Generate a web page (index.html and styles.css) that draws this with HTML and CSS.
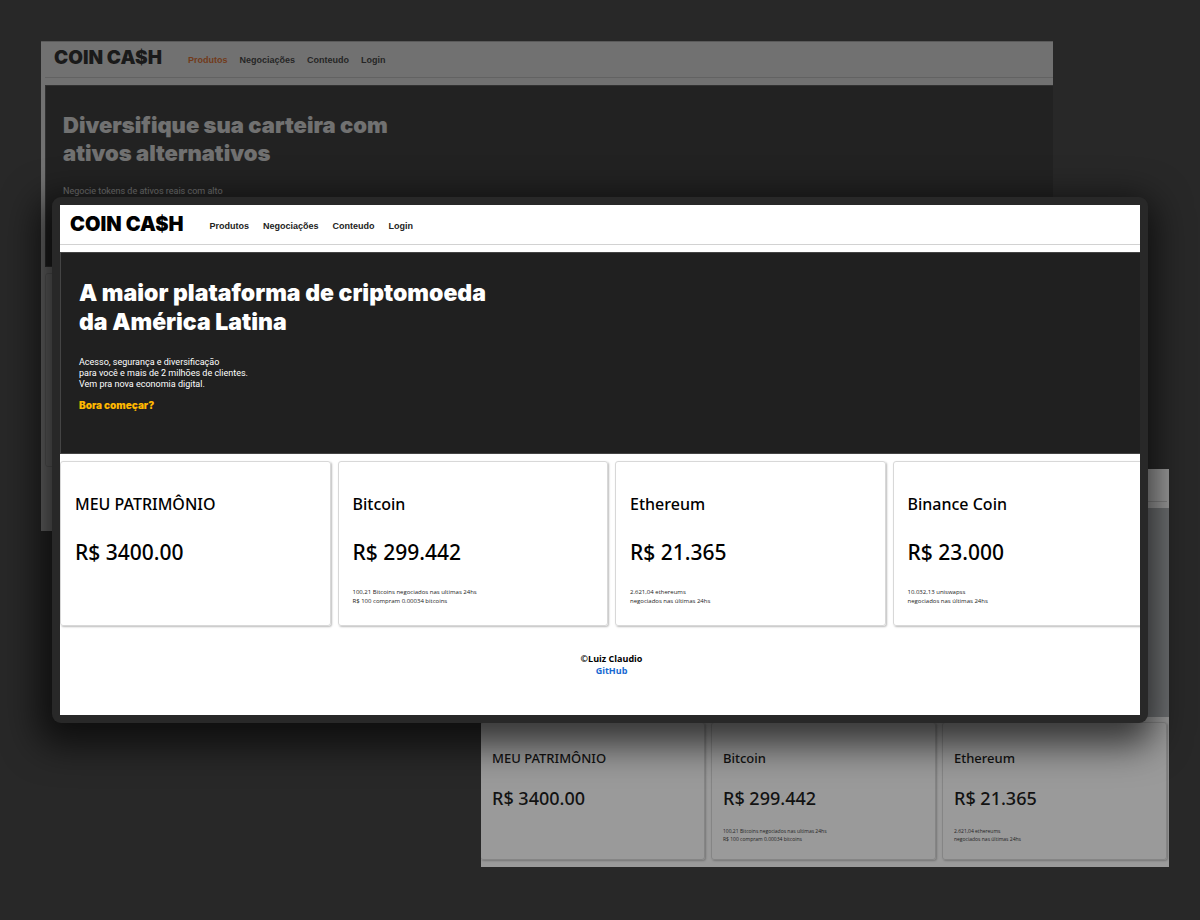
FILE: index.html
```html
<!DOCTYPE html>
<html lang="pt-BR">
<head>
<meta charset="utf-8">
<title>Coin Ca$h</title>
<link rel="stylesheet" href="styles.css">
</head>
<body>
<main class="stage">
  <section class="window window-products">
    <header class="topbar">
      <div class="logo">COIN CA$H</div>
      <nav class="menu">
        <a class="active" href="#produtos">Produtos</a>
        <a href="#negociacoes">Negociações</a>
        <a href="#conteudo">Conteudo</a>
        <a href="#login">Login</a>
      </nav>
    </header>
    <div class="hero">
      <h2>Diversifique sua carteira com<br>ativos alternativos</h2>
      <p>Negocie tokens de ativos reais com alto</p>
    </div>
    <div class="panel"></div>
  </section>

  <section class="window window-wallet">
    <header class="topbar"></header>
    <div class="hero"></div>
    <div class="cards">
      <article class="card"><h3>MEU PATRIMÔNIO</h3><p class="price">R$ 3400.00</p></article>
      <article class="card"><h3>Bitcoin</h3><p class="price">R$ 299.442</p><p class="note">100,21 Bitcoins negociados nas ultimas 24hs<br>R$ 100 compram 0.00034 bitcoins</p></article>
      <article class="card"><h3>Ethereum</h3><p class="price">R$ 21.365</p><p class="note">2.621,04 ethereums<br>negociados nas últimas 24hs</p></article>
    </div>
  </section>

  <section class="window-home">
    <div class="screen">
      <div class="page">
        <header class="topbar">
          <div class="logo">COIN CA$H</div>
          <nav class="menu">
            <a href="#produtos">Produtos</a>
            <a href="#negociacoes">Negociações</a>
            <a href="#conteudo">Conteudo</a>
            <a href="#login">Login</a>
          </nav>
        </header>
        <div class="hero">
          <h1>A maior plataforma de criptomoeda<br>da América Latina</h1>
          <p>Acesso, segurança e diversificação<br>para você e mais de 2 milhões de clientes.<br>Vem pra nova economia digital.</p>
          <a class="cta" href="#comecar">Bora começar?</a>
        </div>
        <div class="cards">
          <article class="card"><h3>MEU PATRIMÔNIO</h3><p class="price">R$ 3400.00</p></article>
          <article class="card"><h3>Bitcoin</h3><p class="price">R$ 299.442</p><p class="note">100,21 Bitcoins negociados nas ultimas 24hs<br>R$ 100 compram 0.00034 bitcoins</p></article>
          <article class="card"><h3>Ethereum</h3><p class="price">R$ 21.365</p><p class="note">2.621,04 ethereums<br>negociados nas últimas 24hs</p></article>
          <article class="card"><h3>Binance Coin</h3><p class="price">R$ 23.000</p><p class="note">10.032,13 uniswapss<br>negociados nas últimas 24hs</p></article>
        </div>
        <footer class="footer">©Luiz Claudio<br><a href="#github">GitHub</a></footer>
      </div>
    </div>
  </section>
</main>
</body>
</html>
```
FILE: styles.css
```css
* { box-sizing: border-box; }

body {
  margin: 0;
  background: #282828;
  color: #000;
  font-family: "Noto Sans", "Open Sans", sans-serif;
}

h1, h2, h3, p { margin: 0; }
a { color: inherit; text-decoration: none; }

.stage {
  position: relative;
  min-height: 920px;
  padding: 197px 52px;
  overflow: hidden;
}

/* Shared page parts */
.topbar {
  display: flex;
  align-items: center;
  height: 40px;
  padding: 0 10px 2px;
  border-bottom: 1px solid #d2d2d2;
}

.logo {
  margin-right: 26px;
  font: 900 20px/24px Inter, sans-serif;
}

.menu {
  display: flex;
  gap: 14px;
  padding-top: 4px;
  color: #222;
  font: 700 9px/12px "Liberation Sans", Arial, sans-serif;
}

.hero {
  min-height: 202px;
  margin-top: 7px;
  padding: 26px 18px;
  border: 1px solid #444;
  background: #202020;
  color: #fff;
}

.hero h1,
.hero h2 {
  font: 900 23px/29px Inter, sans-serif;
}

.hero p {
  margin-top: 20px;
  font: 9px/11px Roboto, sans-serif;
}

.cta {
  display: block;
  margin-top: 9px;
  color: #ffb800;
  font: 900 10px/12px Inter, sans-serif;
}

.cards {
  display: flex;
  gap: 7px;
  margin-top: 7px;
}

.card {
  flex: 1;
  min-height: 165px;
  padding: 30px 14px 0;
  border: 1px solid #d8d8d8;
  border-radius: 3px;
  box-shadow: 1px 1px 2px #bbb;
}

.card h3 {
  font-size: 16px;
  font-weight: 500;
  line-height: 24px;
}

.price {
  margin-top: 20px;
  font-size: 21px;
  font-weight: 500;
  line-height: 32px;
}

.note {
  margin-top: 20px;
  color: #222;
  font-family: "Open Sans", sans-serif;
  font-size: 6px;
  line-height: 9px;
}

.footer {
  margin-top: 27px;
  font-family: "Open Sans", sans-serif;
  font-size: 9px;
  font-weight: 700;
  line-height: 12px;
  text-align: center;
}

.footer a { color: #1769d2; }

/* Front window */
.window-home {
  position: relative;
  padding: 8px;
  border-radius: 9px;
  background: #282828;
  box-shadow: -4px 12px 36px 10px rgba(0, 0, 0, .66);
}

.screen {
  min-height: 510px;
  overflow: hidden;
  background: #fff;
}

.page { width: calc(100% + 23px); }

/* Dimmed windows behind */
.window {
  position: absolute;
  overflow: hidden;
  background: #fff;
}

.window-products {
  top: 41px;
  left: 41px;
  right: 147px;
  min-height: 490px;
  padding-left: 4px;
  border-top: 1px solid #bbb;
  opacity: .34;
}

.window-products .topbar {
  height: 36px;
  padding: 0 9px 3px;
}

.window-products .logo {
  font-size: 19px;
}

.window-products .menu {
  gap: 12px;
}

.window-products .active { color: #ff6000; }

.window-products .hero {
  min-height: 182px;
  padding: 25px 17px;
  border-right: 0;
  background: #181818;
}

.window-products h2 {
  font-size: 22px;
  line-height: 28px;
}

.window-products .hero p { margin-top: 19px; }

.panel {
  height: 194px;
  margin-top: 6px;
  border: 1px solid #d0d0d0;
  border-radius: 3px;
}

.window-wallet {
  top: 469px;
  left: 481px;
  right: 31px;
  padding: 0 2px 7px 0;
  opacity: .53;
}

.window-wallet .topbar { height: 33px; }

.window-wallet .hero {
  min-height: 209px;
  margin: 6px -2px 0 0;
  border: 0;
  background: #aaaeb2;
}

.window-wallet .cards {
  gap: 6px;
  margin: 5px 0 0 -1px;
}

.window-wallet .card {
  min-height: 138px;
  padding: 25px 11px 0;
}

.window-wallet h3 {
  font-size: 13px;
  line-height: 20px;
}

.window-wallet .price {
  margin-top: 17px;
  font-size: 18px;
  line-height: 26px;
}

.window-wallet .note {
  margin-top: 16px;
  font-size: 5px;
  line-height: 8px;
}
```
